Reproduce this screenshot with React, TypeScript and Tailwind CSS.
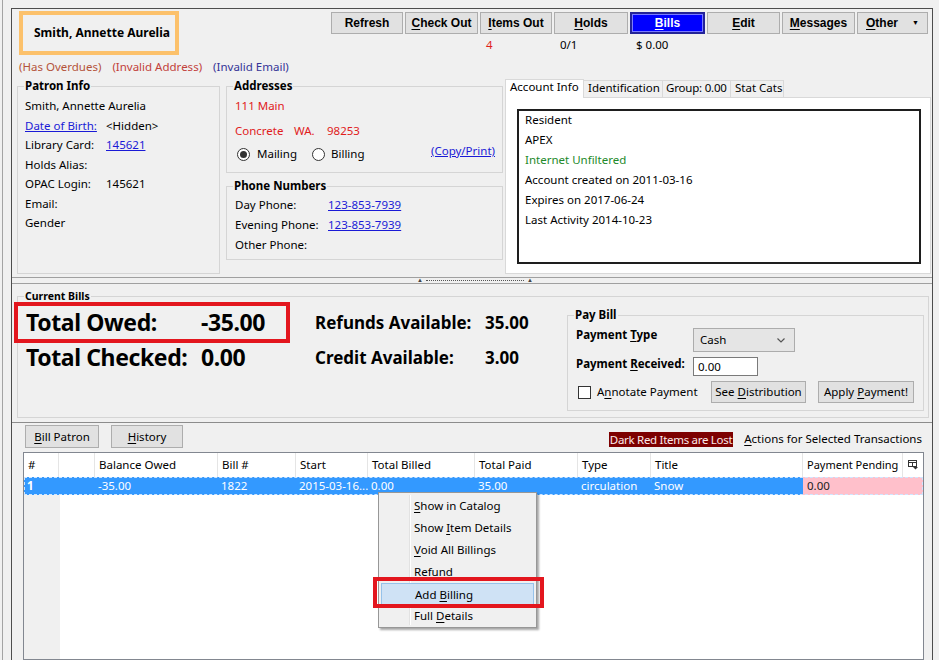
import React from "react";

const UI = "font-['Noto_Sans',sans-serif] text-[11.5px] whitespace-nowrap";
const ARIAL = "font-['Liberation_Sans',Arial,sans-serif]";

function U({ children }: { children: React.ReactNode }) {
  return <span className="underline underline-offset-[2px]">{children}</span>;
}

function Legend({ children, small }: { children: React.ReactNode; small?: boolean }) {
  return (
    <legend
      className={`ml-[6px] px-[1px] font-bold ${small ? "text-[10.5px] leading-[14px]" : "leading-[16px]"}`}
    >
      {children}
    </legend>
  );
}

const topButtons = [
  { w: "w-[72px]", label: <>Refresh</> },
  { w: "w-[73px]", label: <><U>C</U>heck Out</> },
  { w: "w-[72px]", label: <><U>I</U>tems Out</>, sub: "4", red: true },
  { w: "w-[74px]", label: <><U>H</U>olds</>, sub: "0/1" },
  { w: "w-[75px]", label: <><U>B</U>ills</>, sub: "$ 0.00", active: true },
  { w: "w-[73px]", label: <><U>E</U>dit</> },
  { w: "w-[73px]", label: <><U>M</U>essages</> },
  { w: "w-[71px]", label: <><U>O</U>ther</>, menu: true },
];

function TopButtons() {
  return (
    <div className="ml-auto mr-[4px] mt-[3px] flex gap-[2px]">
      {topButtons.map((b, i) => (
        <div key={i} className={`${b.w} flex flex-col`}>
          <div
            className={`h-[22px] flex items-center justify-center ${ARIAL} font-bold text-[12px] ${
              b.active
                ? "bg-[#0000ff] text-white border-2 border-[#232399] shadow-[inset_0_0_0_1px_#7a7aff]"
                : "bg-[#e1e1e1] border border-[#adadad]"
            }`}
          >
            <span>{b.label}</span>
            {b.menu && <span className="ml-[14px] text-[7px]">▼</span>}
          </div>
          <div className={`mt-[4px] h-[14px] leading-[14px] pl-[6px] ${b.red ? "text-[#e0201b]" : ""}`}>
            {b.sub}
          </div>
        </div>
      ))}
    </div>
  );
}

function Radio({ on }: { on?: boolean }) {
  return (
    <span className="w-[13px] h-[13px] rounded-full border border-[#333] bg-white flex items-center justify-center">
      {on && <span className="w-[7px] h-[7px] rounded-full bg-[#333]" />}
    </span>
  );
}

function TopSection() {
  return (
    <div className="h-[268px] flex flex-col">
      <div className="h-[46px] flex items-start">
        <div className="ml-[7px] mt-[2px] w-[160px] h-[44px] border-[4px] border-[#fcc16b] flex items-center pl-[11px] font-bold text-[12px]">
          Smith, Annette Aurelia
        </div>
        <TopButtons />
      </div>
      <div className="mt-[5px] h-[14px] leading-[14px] pl-[7px] flex gap-[11px]">
        <span className="text-[#b4533a]">(Has Overdues)</span>
        <span className="text-[#c2413a]">(Invalid Address)</span>
        <span className="text-[#343497]">(Invalid Email)</span>
      </div>
      <div className="h-[203px] flex items-start">
        <fieldset className="ml-[5px] mt-[4px] w-[203px] h-[196px] border border-[#d5d5d5]">
          <Legend>Patron Info</Legend>
          <div className="pl-[7px] pt-[2px] grid grid-cols-[81px_1fr] auto-rows-[19.5px] items-center">
            <span className="col-span-2">Smith, Annette Aurelia</span>
            <span className="text-[#1a1ad6] underline">Date of Birth:</span>
            <span>&lt;Hidden&gt;</span>
            <span>Library Card:</span>
            <span className="text-[#1a1ad6] underline">145621</span>
            <span className="col-span-2">Holds Alias:</span>
            <span>OPAC Login:</span>
            <span>145621</span>
            <span className="col-span-2">Email:</span>
            <span className="col-span-2">Gender</span>
          </div>
        </fieldset>
        <div className="ml-[6px] mt-[4px] w-[277px] flex flex-col">
          <fieldset className="h-[95px] border border-[#d5d5d5]">
            <Legend>Addresses</Legend>
            <div className="pl-[8px] text-[#e0201b]">
              <div className="mt-[2px] h-[20px] leading-[20px]">111 Main</div>
              <div className="mt-[5px] h-[20px] leading-[20px] flex">
                <span className="w-[59px]">Concrete</span>
                <span className="w-[33px]">WA.</span>
                <span>98253</span>
              </div>
            </div>
            <div className="mt-[3px] h-[20px] flex items-start pl-[10px] pr-[7px]">
              <div className="h-[20px] flex items-center">
                <Radio on />
                <span className="ml-[7px]">Mailing</span>
                <span className="ml-[15px]"><Radio /></span>
                <span className="ml-[6px]">Billing</span>
              </div>
              <span className="ml-auto leading-[14px] text-[#1a1ad6] underline">(Copy/Print)</span>
            </div>
          </fieldset>
          <fieldset className="mt-[5px] h-[82px] border border-[#d5d5d5]">
            <Legend>Phone Numbers</Legend>
            <div className="pl-[8px] pt-[1px] grid grid-cols-[93px_1fr] auto-rows-[20px] items-center">
              <span>Day Phone:</span>
              <span className="text-[#1a1ad6] underline">123-853-7939</span>
              <span>Evening Phone:</span>
              <span className="text-[#1a1ad6] underline">123-853-7939</span>
              <span className="col-span-2">Other Phone:</span>
            </div>
          </fieldset>
        </div>
        <div className="ml-[2px] mt-[5px] w-[426px] flex flex-col">
          <div className="h-[18px] flex items-end">
            <div className="relative z-10 -mb-px w-[79px] h-[19px] bg-white border border-b-0 border-[#d9d9d9] pl-[4px] leading-[13px]">
              Account Info
            </div>
            <div className="-ml-px w-[80px] h-[17px] bg-[#f0f0f0] border border-b-0 border-[#d9d9d9] pl-[4px] leading-[13px]">
              Identification
            </div>
            <div className="-ml-px w-[69px] h-[17px] bg-[#f0f0f0] border border-b-0 border-[#d9d9d9] pl-[3px] leading-[13px] tracking-[-0.2px]">
              Group: 0.00
            </div>
            <div className="-ml-px w-[54px] h-[17px] bg-[#f0f0f0] border border-b-0 border-[#d9d9d9] pl-[4px] leading-[13px]">
              Stat Cats
            </div>
          </div>
          <div className="h-[177px] bg-white border border-[#d9d9d9]">
            <div className="ml-[11px] mt-[11px] w-[404px] h-[155px] border-2 border-[#1e1e1e] pl-[6px] leading-[20px]">
              <div className="-mt-px">Resident</div>
              <div>APEX</div>
              <div className="text-[#22892a]">Internet Unfiltered</div>
              <div>Account created on 2011-03-16</div>
              <div>Expires on 2017-06-24</div>
              <div>Last Activity 2014-10-23</div>
            </div>
          </div>
        </div>
      </div>
    </div>
  );
}

function Splitter() {
  return (
    <div className="h-[7px] border-t border-b border-[#a0a0a0] flex items-center">
      <div className="ml-[405px] w-[116px] h-[5px] flex items-center gap-[3px] text-[#444]">
        <span className="text-[6px] leading-[5px]">▲</span>
        <span className="flex-1 border-t border-dotted border-[#555]" />
        <span className="text-[6px] leading-[5px]">▲</span>
      </div>
    </div>
  );
}

function PayBill() {
  return (
    <fieldset className="ml-auto mr-[4px] mt-[4px] w-[357px] h-[104px] border border-[#d5d5d5]">
      <Legend>Pay Bill</Legend>
      <div className="pl-[8px]">
        <div className="mt-[5px] flex items-start">
          <span className="w-[117px] font-bold leading-[14px]">
            Payment <U>T</U>ype
          </span>
          <div className="w-[102px] h-[24px] bg-[#e5e5e5] border border-[#acacac] flex items-center pl-[6px] pr-[9px]">
            <span>Cash</span>
            <svg className="ml-auto" width="8" height="5" viewBox="0 0 8 5">
              <path d="M0.5 0.5 L4 4 L7.5 0.5" fill="none" stroke="#555" strokeWidth="1.2" />
            </svg>
          </div>
        </div>
        <div className="mt-[5px] flex items-start">
          <span className="w-[117px] font-bold leading-[14px]">
            Payment <U>R</U>eceived:
          </span>
          <div className="w-[65px] h-[19px] bg-white border border-[#7a7a7a] pl-[4px] leading-[17px]">0.00</div>
        </div>
        <div className="mt-[5px] h-[22px] flex items-center">
          <div className="w-[135px] flex items-center">
            <span className="ml-[2px] w-[13px] h-[13px] border border-[#333] bg-white" />
            <span className="ml-[6px]">
              A<U>n</U>notate Payment
            </span>
          </div>
          <div className="w-[95px] h-[22px] bg-[#e1e1e1] border border-[#adadad] flex items-center justify-center">
            <span>
              See <U>D</U>istribution
            </span>
          </div>
          <div className="ml-[12px] w-[96px] h-[22px] bg-[#e1e1e1] border border-[#adadad] flex items-center justify-center">
            <span>
              Apply <U>P</U>ayment!
            </span>
          </div>
        </div>
      </div>
    </fieldset>
  );
}

function CurrentBills() {
  return (
    <div className="h-[139px] pt-[5px] border-b border-[#8c8c8c]">
      <fieldset className="ml-[5px] mr-[3px] h-[129px] border border-[#d5d5d5]">
        <Legend small>Current Bills</Legend>
        <div className="flex items-start">
          <div className="pl-[8px] mt-[2px] w-[297px] grid grid-cols-[175px_auto] auto-rows-[35px] items-center font-bold text-[23px] tracking-[-0.4px]">
            <span>Total Owed:</span>
            <span>-35.00</span>
            <span>Total Checked:</span>
            <span>0.00</span>
          </div>
          <div className="mt-[2px] grid grid-cols-[170px_auto] auto-rows-[35px] items-center font-bold text-[17px]">
            <span>Refunds Available:</span>
            <span>35.00</span>
            <span>Credit Available:</span>
            <span>3.00</span>
          </div>
          <PayBill />
        </div>
      </fieldset>
    </div>
  );
}

const cols = [
  { w: "w-[35px]", h: "#", v: "1" },
  { w: "w-[36px]", h: "", v: "" },
  { w: "w-[123px]", h: "Balance Owed", v: "-35.00" },
  { w: "w-[78px]", h: "Bill #", v: "1822" },
  { w: "w-[72px]", h: "Start", v: "2015-03-16..." },
  { w: "w-[107px]", h: "Total Billed", v: "0.00" },
  { w: "w-[103px]", h: "Total Paid", v: "35.00" },
  { w: "w-[73px]", h: "Type", v: "circulation" },
  { w: "w-[152px]", h: "Title", v: "Snow" },
];

function ColumnPicker() {
  return (
    <svg width="11" height="10" viewBox="0 0 11 10">
      <rect x="0.5" y="0.5" width="8" height="6" fill="none" stroke="#333" />
      <line x1="0.5" y1="2.5" x2="8.5" y2="2.5" stroke="#333" />
      <line x1="4.5" y1="2.5" x2="4.5" y2="6.5" stroke="#333" />
      <path d="M5 7 L10 7 L7.5 9.5 Z" fill="#333" />
    </svg>
  );
}

function LowerSection() {
  return (
    <div className="flex-1 flex flex-col min-h-0">
      <div className="mt-[2px] h-[23px] flex items-center">
        <div className="ml-[13px] w-[74px] h-[23px] bg-[#e1e1e1] border border-[#adadad] flex items-center justify-center">
          <span>
            <U>B</U>ill Patron
          </span>
        </div>
        <div className="ml-[12px] w-[72px] h-[23px] bg-[#e1e1e1] border border-[#adadad] flex items-center justify-center">
          <span>
            <U>H</U>istory
          </span>
        </div>
        <span className="ml-auto mt-[5px] h-[15px] leading-[15px] px-[1px] bg-[#7d0000] text-[#fbeaea] tracking-[-0.3px]">
          Dark Red Items are Lost
        </span>
        <span className="ml-[11px] mr-[10px] mt-[5px]">
          <U>A</U>ctions for Selected Transactions
        </span>
      </div>
      <div className="mt-[4px] ml-[11px] w-[901px] flex-1 border border-[#828790] bg-white flex flex-col">
        <div className="h-[24px] flex shrink-0">
          {cols.map((c, i) => (
            <div key={i} className={`${c.w} h-full border-r border-[#e5e5e5] pl-[4px] leading-[24px]`}>
              {c.h}
            </div>
          ))}
          <div className="w-[100px] h-full border-r border-[#e5e5e5] pl-[4px] leading-[24px] text-[11px] overflow-hidden">
            Payment Pending
          </div>
          <div className="flex-1 h-full flex items-center justify-center">
            <ColumnPicker />
          </div>
        </div>
        <div className="h-[18px] flex shrink-0 bg-[#3399ff] text-white outline-1 outline-dashed outline-offset-[-1px] outline-[#cfe6ff]">
          {cols.map((c, i) => (
            <div
              key={i}
              className={`${c.w} h-full pl-[3px] leading-[18px] overflow-hidden ${i === 0 ? "font-bold" : ""}`}
            >
              {c.v}
            </div>
          ))}
          <div className="flex-1 h-full bg-[#ffc0cb] text-[#222] pl-[4px] leading-[18px]">0.00</div>
        </div>
        <div className="flex-1 flex">
          <div className="w-[36px] bg-[#f0f0f0]" />
          <div className="flex-1 bg-white" />
        </div>
      </div>
    </div>
  );
}

const menuItems = [
  <><U>S</U>how in Catalog</>,
  <>Show <U>I</U>tem Details</>,
  <><U>V</U>oid All Billings</>,
  <>Refund</>,
  <>Add <U>B</U>illing</>,
  <>Full <U>D</U>etails</>,
];

function ContextMenu() {
  return (
    <div className="absolute left-[378px] top-[492px] w-[159px] h-[136px] bg-[#f0f0f0] border border-[#979797] shadow-[2px_2px_2px_rgba(0,0,0,0.35)] pt-[2px] px-[2px]">
      <div className="absolute left-[30px] top-[2px] bottom-[2px] w-[2px] border-l border-[#e2e2e2] bg-white" />
      {menuItems.map((m, i) => (
        <div
          key={i}
          className={`relative h-[22px] leading-[22px] pl-[33px] ${
            i === 4 ? "bg-[#cfe2f5] border border-[#96c2ea] leading-[20px] pl-[32px]" : ""
          }`}
        >
          {m}
        </div>
      ))}
    </div>
  );
}

export default function App() {
  return (
    <div className={`relative w-[939px] h-[660px] overflow-hidden bg-[#f0f0f0] text-black flex ${UI}`}>
      <div className="w-[3px] h-full border-r border-[#a3a3a3]" />
      <div className="ml-[8px] mt-[8px] w-[922px] h-[652px] border-l border-t border-r border-[#4d4d4d] flex flex-col">
        <TopSection />
        <Splitter />
        <CurrentBills />
        <LowerSection />
      </div>
      <ContextMenu />
      <div className="absolute left-[14px] top-[302px] w-[276px] h-[41px] border-[4px] border-[#e3161e]" />
      <div className="absolute left-[373px] top-[577px] w-[171px] h-[31px] border-[4px] border-[#e3161e]" />
    </div>
  );
}
